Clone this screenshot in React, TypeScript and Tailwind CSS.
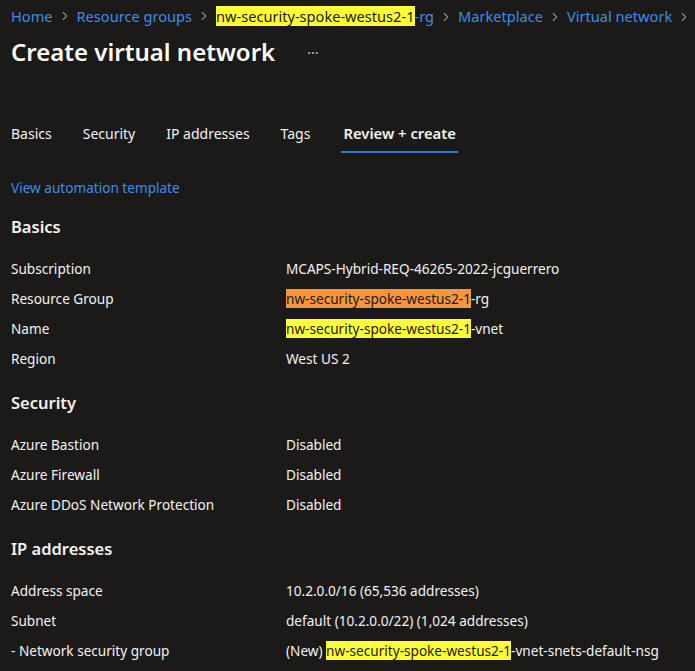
import { ChevronRight } from "lucide-react";

const hl = "bg-[#ffff3a] text-[#1b1a19]";
const orange = "bg-[#f7963f] text-[#1b1a19]";

function Row({ label, children }: { label: string; children: React.ReactNode }) {
  return (
    <div className="flex h-[30px] items-center whitespace-nowrap">
      <div className="w-[275px] shrink-0">{label}</div>
      <div>{children}</div>
    </div>
  );
}

function Section({ title, children }: { title: string; children: React.ReactNode }) {
  return (
    <div>
      <h2 className="flex h-[30px] items-center text-[16.5px] font-semibold">{title}</h2>
      <div className="mt-[12px]">{children}</div>
    </div>
  );
}

const crumbs = ["Home", "Resource groups"];

function Chevron() {
  return <ChevronRight className="mx-[5px] h-[14px] w-[14px] shrink-0 text-[#8a8886]" />;
}

export default function App() {
  return (
    <div
      className="h-[671px] w-[695px] overflow-hidden bg-[#1b1a19] pl-[11px] text-[13.6px] text-[#f3f2f1]"
      style={{ fontFamily: '"Segoe UI", "Noto Sans", sans-serif' }}
    >
      <div className="flex h-[33px] items-center whitespace-nowrap text-[14.6px] text-[#3b8ee8]">
        {crumbs.map((c) => (
          <span key={c} className="flex shrink-0 items-center">
            {c}
            <Chevron />
          </span>
        ))}
        <span className="shrink-0">
          <span className={hl}>nw-security-spoke-westus2-1</span>-rg
        </span>
        <Chevron />
        <span className="shrink-0">Marketplace</span>
        <Chevron />
        <span className="shrink-0">Virtual network</span>
        <Chevron />
      </div>

      <div className="flex h-[38px] items-center">
        <h1 className="text-[24px] font-semibold text-white">Create virtual network</h1>
        <span className="ml-[32px] text-[14px] text-[#c8c6c4]">···</span>
      </div>

      <div className="mt-[42px] flex h-[40px] gap-[31px] text-[14px]">
        <div className="flex items-center">Basics</div>
        <div className="flex items-center">Security</div>
        <div className="flex items-center">IP addresses</div>
        <div className="flex items-center">Tags</div>
        <div className="flex items-center border-b-2 border-[#2f7bd1] px-[2px] pt-[2px] text-[14.8px] font-semibold">
          Review + create
        </div>
      </div>

      <div className="mt-[25px] text-[#3b8ee8]">View automation template</div>

      <div className="mt-[14px] flex flex-col gap-[14px]">
        <Section title="Basics">
          <Row label="Subscription">MCAPS-Hybrid-REQ-46265-2022-jcguerrero</Row>
          <Row label="Resource Group">
            <span className={orange}>nw-security-spoke-westus2-1</span>-rg
          </Row>
          <Row label="Name">
            <span className={hl}>nw-security-spoke-westus2-1</span>-vnet
          </Row>
          <Row label="Region">West US 2</Row>
        </Section>
        <Section title="Security">
          <Row label="Azure Bastion">Disabled</Row>
          <Row label="Azure Firewall">Disabled</Row>
          <Row label="Azure DDoS Network Protection">Disabled</Row>
        </Section>
        <Section title="IP addresses">
          <Row label="Address space">10.2.0.0/16 (65,536 addresses)</Row>
          <Row label="Subnet">default (10.2.0.0/22) (1,024 addresses)</Row>
          <Row label="- Network security group">
            (New) <span className={hl}>nw-security-spoke-westus2-1</span>-vnet-snets-default-nsg
          </Row>
        </Section>
      </div>
    </div>
  );
}
